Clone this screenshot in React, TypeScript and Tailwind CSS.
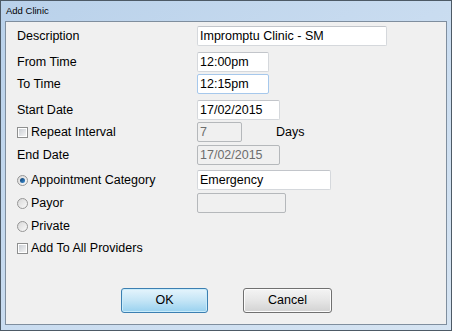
import type { ReactNode } from 'react'

const FONT = "font-['Liberation_Sans',Arial,sans-serif]"

function TextBox({ value, width, disabled, focused }: { value: string; width: string; disabled?: boolean; focused?: boolean }) {
  return (
    <div
      className={`flex h-5 items-center rounded-[2px] border pl-[2px] text-[12.5px] ${width} ${
        disabled
          ? 'border-[#b5b8bb] bg-[#f0f0f0] text-[#6d6d6d]'
          : focused
            ? 'border-[#a6c8ec] bg-white text-black'
            : 'border-[#d5d8dc] border-t-[#c2c5ca] bg-white text-black'
      }`}
    >
      {value}
    </div>
  )
}

function CheckBox() {
  return (
    <span className="mr-[3px] flex size-[11px] items-center justify-center border border-[#8e8f8f] bg-white">
      <span className="size-[7px] bg-gradient-to-br from-[#cbcfd5] to-[#f4f4f4]" />
    </span>
  )
}

function Radio({ checked }: { checked?: boolean }) {
  return (
    <span className="mr-[3px] flex size-[11px] items-center justify-center rounded-full border border-[#969696] bg-gradient-to-br from-[#d8d8d8] to-[#fafafa]">
      {checked && <span className="size-[5px] rounded-full bg-gradient-to-br from-[#0f3e6c] to-[#3d8fd6]" />}
    </span>
  )
}

function Row({ label, children, className = '' }: { label: ReactNode; children?: ReactNode; className?: string }) {
  return (
    <div className={`flex h-5 items-center pl-[11px] ${className}`}>
      <div className="flex w-[180px] items-center">{label}</div>
      {children}
    </div>
  )
}

function Button({ label, primary, width }: { label: string; primary?: boolean; width: string }) {
  return (
    <div
      className={`flex h-[25px] items-center justify-center rounded-[3px] border text-[12.5px] text-black ${width} ${
        primary
          ? 'border-[#3c7fb1] bg-gradient-to-b from-[#e5f4fc] via-[#c4e5f6] to-[#98d1ef] shadow-[inset_0_0_0_1px_#c9ecfb]'
          : 'border-[#707070] bg-gradient-to-b from-[#f4f4f4] via-[#e6e6e6] to-[#d2d2d2] shadow-[inset_0_0_0_1px_#fcfcfc]'
      }`}
    >
      {label}
    </div>
  )
}

export default function App() {
  return (
    <div className={`${FONT} h-[331px] w-[452px] border border-[#4d5a66] bg-gradient-to-br from-[#b9d1ea] via-[#c9dcf0] to-[#d6e4f2]`}>
      <div className="flex h-[20px] items-center pl-[5px] text-[9.5px] text-black">Add Clinic</div>
      <div className="mx-[4px] h-[304px] border border-[#7f8e9e] bg-[#f0f0f0] pt-[4px] text-[12.5px] text-black">
        <Row label="Description">
          <TextBox value="Impromptu Clinic - SM" width="w-[190px]" />
        </Row>
        <Row label="From Time" className="mt-[6px]">
          <TextBox value="12:00pm" width="w-[72px]" />
        </Row>
        <Row label="To Time" className="mt-[2px]">
          <TextBox value="12:15pm" width="w-[72px]" focused />
        </Row>
        <Row label="Start Date" className="mt-[6px]">
          <TextBox value="17/02/2015" width="w-[83px]" />
        </Row>
        <Row
          label={
            <>
              <CheckBox />
              Repeat Interval
            </>
          }
          className="mt-[2px]"
        >
          <TextBox value="7" width="w-[45px]" disabled />
          <span className="ml-[34px]">Days</span>
        </Row>
        <Row label="End Date" className="mt-[3px]">
          <TextBox value="17/02/2015" width="w-[83px]" disabled />
        </Row>
        <Row
          label={
            <>
              <Radio checked />
              Appointment Category
            </>
          }
          className="mt-[5px]"
        >
          <TextBox value="Emergency" width="w-[134px]" />
        </Row>
        <Row
          label={
            <>
              <Radio />
              Payor
            </>
          }
          className="mt-[3px]"
        >
          <TextBox value="" width="w-[89px]" disabled />
        </Row>
        <Row
          label={
            <>
              <Radio />
              Private
            </>
          }
          className="mt-[3px]"
        />
        <Row
          label={
            <>
              <CheckBox />
              Add To All Providers
            </>
          }
          className="mt-[2px]"
        />
        <div className="mt-[30px] flex gap-[35px] pl-[115px]">
          <Button label="OK" primary width="w-[87px]" />
          <Button label="Cancel" width="w-[89px]" />
        </div>
      </div>
    </div>
  )
}
